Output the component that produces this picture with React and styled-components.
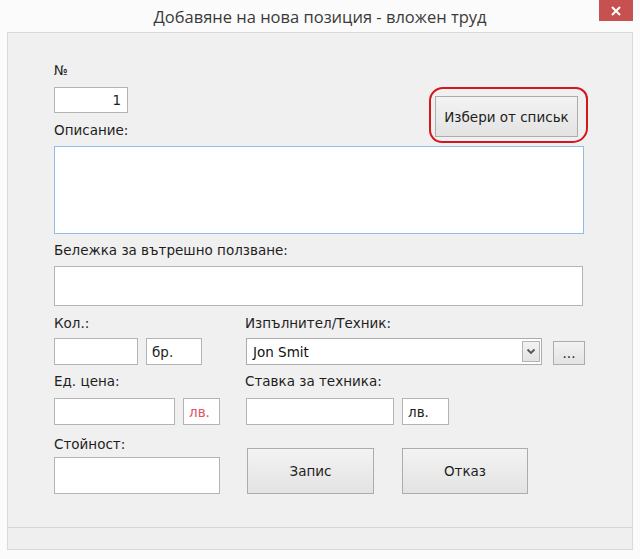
import React from 'react';
import styled, { createGlobalStyle } from 'styled-components';

const GlobalStyle = createGlobalStyle`
  html, body {
    margin: 0;
    padding: 0;
    background: #fbfbfb;
  }
  * { box-sizing: border-box; }
`;

const Window = styled.div`
  width: 640px;
  height: 559px;
  display: flex;
  flex-direction: column;
  background: #fbfbfb;
  font-family: "DejaVu Sans", "Liberation Sans", sans-serif;
  font-size: 13.5px;
  color: #1e1e1e;
`;

const TitleBar = styled.div`
  position: relative;
  height: 32px;
  flex: none;
  display: flex;
  align-items: center;
  justify-content: center;
`;

const Title = styled.div`
  font-family: "Open Sans", "Noto Sans", sans-serif;
  font-size: 16.5px;
  color: #3a3a3a;
  margin-top: 1px;
`;

const CloseButton = styled.div`
  position: absolute;
  top: 0;
  right: 7px;
  width: 34px;
  height: 21px;
  background: #c75050;
  color: #fff;
  display: flex;
  align-items: center;
  justify-content: center;
`;

const Client = styled.div`
  flex: 1;
  margin: 0 7px 9px;
  border: 1px solid #d9d9d9;
  background: #f0f0f0;
  display: flex;
  flex-direction: column;
`;

const Form = styled.div`
  flex: 1;
  padding: 29px 49px 0 46px;
  display: flex;
  flex-direction: column;
`;

const StatusStrip = styled.div`
  height: 22px;
  flex: none;
  border-top: 1px solid #d6d6d6;
  background: #efefef;
`;

const Label = styled.div`
  height: 16px;
  line-height: 16px;
  margin-top: ${p => p.$gap || 0}px;
  white-space: nowrap;
`;

const TopSection = styled.div`
  display: flex;
  justify-content: space-between;
  align-items: flex-start;
`;

const Column = styled.div`
  display: flex;
  flex-direction: column;
`;

const Box = styled.div`
  width: ${p => p.$w}px;
  height: ${p => p.$h}px;
  margin-top: ${p => p.$gap || 0}px;
  background: #fff;
  border: 1px solid ${p => (p.$focus ? '#92bbe6' : '#b4b4b4')};
  display: flex;
  align-items: center;
  justify-content: ${p => (p.$right ? 'flex-end' : 'flex-start')};
  padding: 0 6px 0 5px;
  color: ${p => p.$color || '#1e1e1e'};
  flex: none;
`;

const RedRing = styled.div`
  margin-top: 25px;
  margin-right: -5px;
  margin-bottom: -10px;
  padding: 7px 8px 4px 4px;
  border: 2.5px solid #d4161f;
  border-radius: 14px 12px 15px 13px;
`;

const Button = styled.button`
  width: ${p => p.$w}px;
  height: ${p => p.$h}px;
  padding: 0;
  border: 1px solid #acacac;
  background: linear-gradient(#f3f3f3, #e3e3e3);
  font-family: inherit;
  font-size: 13.5px;
  color: #1e1e1e;
  flex: none;
  margin-top: ${p => p.$gap || 0}px;
`;

const Grid = styled.div`
  display: grid;
  grid-template-columns: 191px 1fr;
  align-items: start;
`;

const Cell = styled.div`
  display: flex;
  flex-direction: column;
  margin-top: ${p => p.$gap || 0}px;
`;

const InputRow = styled.div`
  display: flex;
  align-items: flex-start;
  gap: ${p => p.$gap || 8}px;
  margin-top: ${p => p.$top || 0}px;
  margin-left: ${p => p.$shift || 0}px;
`;

const Combo = styled.div`
  width: 296px;
  height: 27px;
  background: #fff;
  border: 1px solid #acacac;
  display: flex;
  align-items: center;
  justify-content: space-between;
  padding: 0 1px 0 6px;
  color: #111;
`;

const ComboArrow = styled.div`
  width: 18px;
  height: 21px;
  border: 1px solid #b4b4b4;
  background: linear-gradient(#f2f2f2, #e4e4e4);
  display: flex;
  align-items: center;
  justify-content: center;
`;

const ButtonPair = styled.div`
  display: flex;
  gap: 28px;
  margin-left: 2px;
  margin-top: 23px;
`;

export default function App() {
  return (
    <Window>
      <GlobalStyle />
      <TitleBar>
        <Title>Добавяне на нова позиция - вложен труд</Title>
        <CloseButton>
          <svg width="10" height="10" viewBox="0 0 10 10">
            <path d="M1 1 L9 9 M9 1 L1 9" stroke="#fff" strokeWidth="2" />
          </svg>
        </CloseButton>
      </TitleBar>
      <Client>
        <Form>
          <TopSection>
            <Column>
              <Label>№</Label>
              <Box $w={74} $h={26} $gap={9} $right>1</Box>
              <Label $gap={9}>Описание:</Label>
            </Column>
            <RedRing>
              <Button $w={143} $h={41}>Избери от списьк</Button>
            </RedRing>
          </TopSection>
          <Box $w={530} $h={88} $gap={8} $focus />
          <Label $gap={8}>Бележка за вътрешно ползване:</Label>
          <Box $w={529} $h={40} $gap={8} />

          <Grid>
            <Cell $gap={9}>
              <Label>Кол.:</Label>
              <InputRow $top={7}>
                <Box $w={84} $h={27} />
                <Box $w={56} $h={27}>бр.</Box>
              </InputRow>
            </Cell>
            <Cell $gap={9}>
              <Label>Изпълнител/Техник:</Label>
              <InputRow $top={7} $gap={11} $shift={1}>
                <Combo>
                  <span>Jon Smit</span>
                  <ComboArrow>
                    <svg width="10" height="7" viewBox="0 0 10 7">
                      <path d="M1.5 1.5 L5 5 L8.5 1.5" fill="none" stroke="#555" strokeWidth="1.8" />
                    </svg>
                  </ComboArrow>
                </Combo>
                <Button $w={32} $h={24} $gap={3}>...</Button>
              </InputRow>
            </Cell>

            <Cell $gap={8}>
              <Label>Ед. цена:</Label>
              <InputRow $top={9}>
                <Box $w={121} $h={27} />
                <Box $w={37} $h={27} $color="#e2545c">лв.</Box>
              </InputRow>
            </Cell>
            <Cell $gap={8}>
              <Label>Ставка за техника:</Label>
              <InputRow $top={9} $shift={1}>
                <Box $w={148} $h={27} />
                <Box $w={47} $h={27}>лв.</Box>
              </InputRow>
            </Cell>

            <Cell $gap={11}>
              <Label>Стойност:</Label>
              <Box $w={166} $h={37} $gap={5} />
            </Cell>
            <ButtonPair>
              <Button $w={127} $h={46}>Запис</Button>
              <Button $w={126} $h={46}>Отказ</Button>
            </ButtonPair>
          </Grid>
        </Form>
        <StatusStrip />
      </Client>
    </Window>
  );
}
